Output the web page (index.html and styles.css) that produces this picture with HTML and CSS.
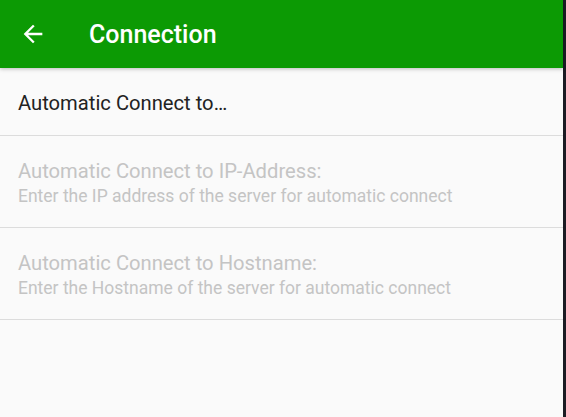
FILE: index.html
```html
<!DOCTYPE html>
<html lang="en">
<head>
    <meta charset="UTF-8">
    <meta name="viewport" content="width=device-width, initial-scale=1.0">
    <title>Connection</title>
    <link rel="stylesheet" href="styles.css">
</head>
<body>
    <div class="screen">
        <header class="toolbar">
            <svg class="back" width="28" height="28" viewBox="0 0 24 24">
                <path d="M20 11H7.83l5.59-5.59L12 4l-8 8 8 8 1.41-1.41L7.83 13H20v-2z" fill="#fff"/>
            </svg>
            <h1 class="title">Connection</h1>
        </header>
        <div class="prefs">
            <div class="pref pref-single">
                <div class="pref-title">Automatic Connect to…</div>
            </div>
            <div class="pref disabled">
                <div class="pref-title">Automatic Connect to IP-Address:</div>
                <div class="pref-summary">Enter the IP address of the server for automatic connect</div>
            </div>
            <div class="pref disabled">
                <div class="pref-title">Automatic Connect to Hostname:</div>
                <div class="pref-summary">Enter the Hostname of the server for automatic connect</div>
            </div>
        </div>
    </div>
</body>
</html>
```

FILE: styles.css
```css
html, body {
    margin: 0;
    height: 100%;
}
body {
    font-family: Roboto, "Noto Sans", sans-serif;
    background-color: #1c1c24;
    display: flex;
}
.screen {
    width: 563px;
    height: 100%;
    background-color: #fafafa;
    display: flex;
    flex-direction: column;
}
.toolbar {
    height: 68px;
    background-color: #0c9a04;
    display: flex;
    align-items: center;
    padding-left: 19px;
    box-shadow: 0 1px 4px rgba(0, 0, 0, 0.25);
    position: relative;
    z-index: 1;
}
.back {
    width: 28px;
    height: 28px;
}
.title {
    margin: 0 0 0 42px;
    color: #fff;
    font-size: 25px;
    font-weight: 500;
}
.pref {
    height: 92px;
    box-sizing: border-box;
    padding: 3px 18px 0 18px;
    display: flex;
    flex-direction: column;
    justify-content: center;
    border-bottom: 1px solid #dcdcdc;
}
.pref-single {
    height: 68px;
}
.pref-title {
    font-size: 20.2px;
    color: #222;
    line-height: 26px;
}
.pref-summary {
    font-size: 17.5px;
    color: #757575;
    line-height: 24px;
}
.disabled .pref-title,
.disabled .pref-summary {
    color: #c4c4c4;
}
```
